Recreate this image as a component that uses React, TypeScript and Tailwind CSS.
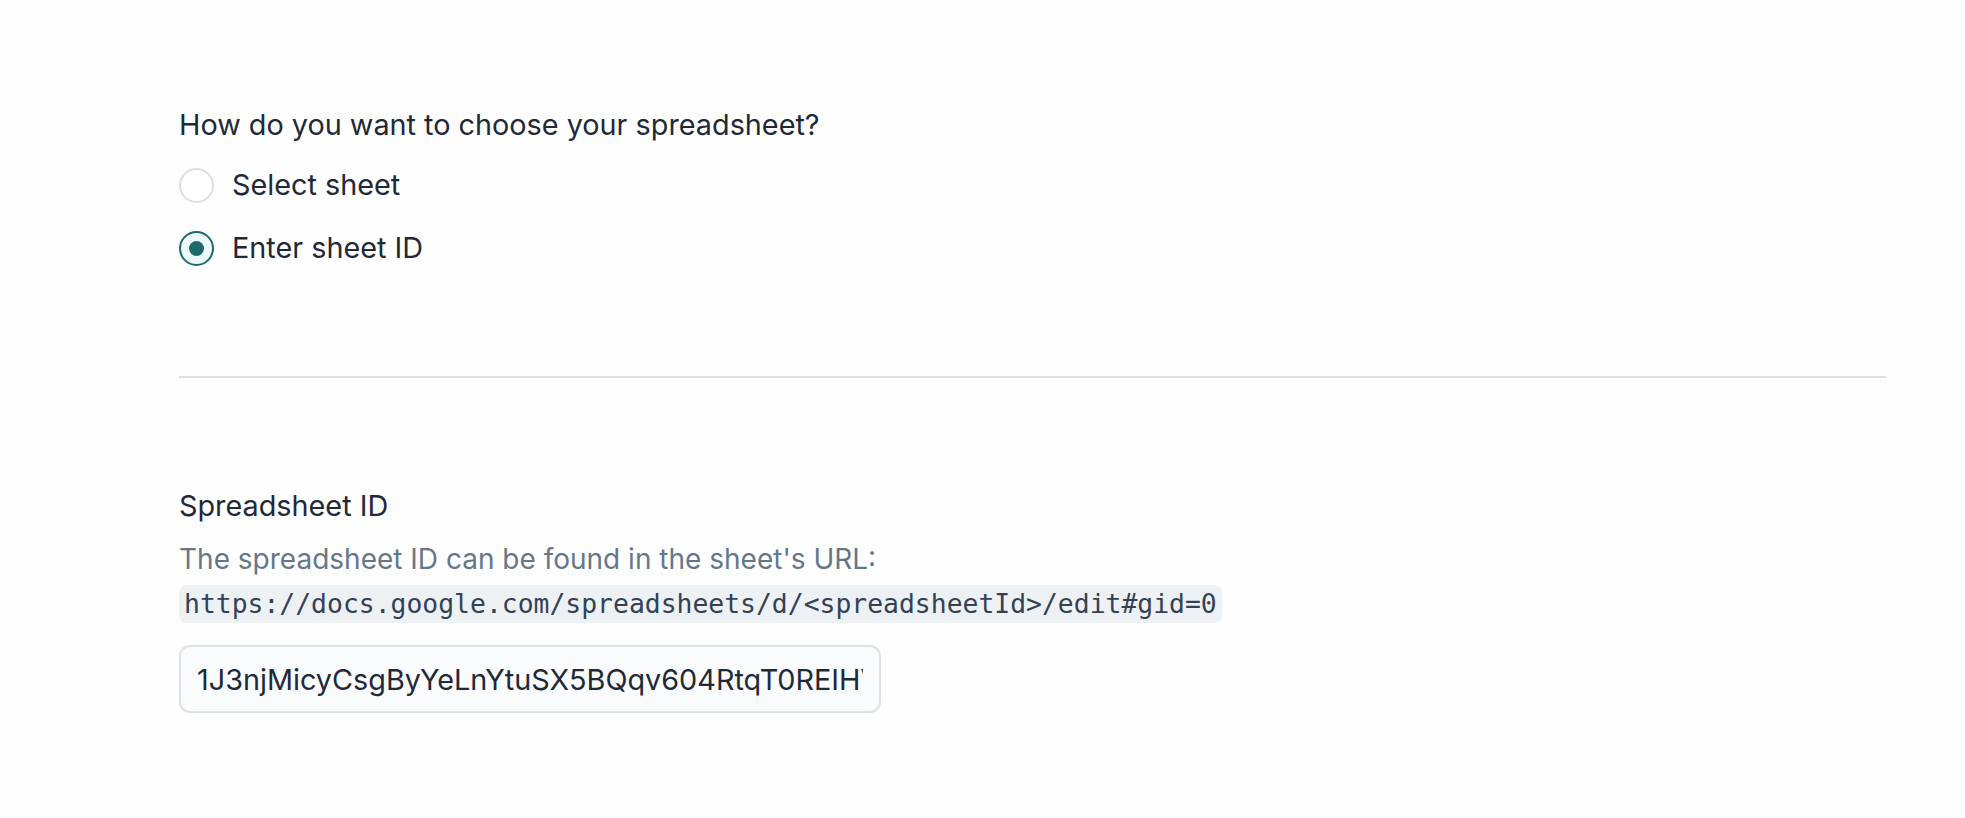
import { useState } from "react";

export default function App() {
  const [mode, setMode] = useState<"select" | "id">("id");

  const options = [
    { value: "select" as const, label: "Select sheet" },
    { value: "id" as const, label: "Enter sheet ID" },
  ];

  return (
    <div className="min-h-screen bg-[#fefefe] font-['Inter',sans-serif] text-[#1f2937]">
      <div className="pl-[179px] pr-[79px] pt-[105px]">
        <fieldset>
          <legend className="text-[28.8px] leading-[40px]">How do you want to choose your spreadsheet?</legend>
          <div className="mt-[20px] flex flex-col gap-[23px]">
            {options.map((o) => {
              const checked = mode === o.value;
              return (
                <label key={o.value} className="flex items-center gap-[18px] cursor-pointer">
                  <input
                    type="radio"
                    name="mode"
                    className="sr-only"
                    checked={checked}
                    onChange={() => setMode(o.value)}
                  />
                  <span
                    className={`flex h-[35px] w-[35px] items-center justify-center rounded-full border-2 ${
                      checked ? "border-[#1e6a6b] bg-[#eef9f9]" : "border-[#d9dee5] bg-white"
                    }`}
                  >
                    {checked && <span className="h-[15px] w-[15px] rounded-full bg-[#1e6a6b]" />}
                  </span>
                  <span className="text-[28.8px] leading-[40px]">{o.label}</span>
                </label>
              );
            })}
          </div>
        </fieldset>

        <div className="mt-[108px] h-[2px] bg-[#dcdfe5]" />

        <div className="mt-[108px]">
          <div className="text-[28.8px] leading-[40px]">Spreadsheet ID</div>
          <div className="mt-[13px] text-[28px] leading-[40px] text-[#66778a]">
            The spreadsheet ID can be found in the sheet's URL:
          </div>
          <div className="mt-[6px]">
            <code className="inline-block rounded-[8px] bg-[#eef1f4] px-[5px] font-['DejaVu_Sans_Mono',monospace] text-[26.4px] leading-[38px] text-[#334155]">
              {"https://docs.google.com/spreadsheets/d/<spreadsheetId>/edit#gid=0"}
            </code>
          </div>
          <input
            type="text"
            readOnly
            value="1J3njMicyCsgByYeLnYtuSX5BQqv604RtqT0REIHVwXk2pQ"
            className="mt-[22px] block h-[68px] w-[702px] rounded-[11px] border-2 border-[#dde1e7] bg-[#fafbfc] px-[16px] text-[28.8px] text-[#1f2937] outline-none"
          />
        </div>
      </div>
    </div>
  );
}
